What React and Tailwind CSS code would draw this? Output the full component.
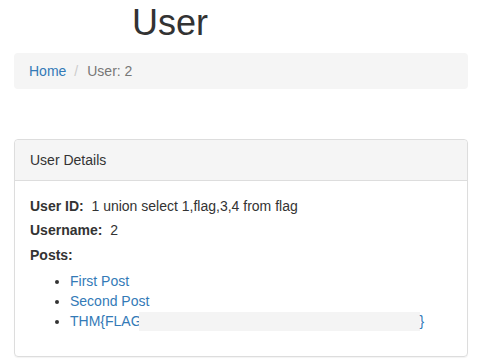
export default function App() {
  return (
    <div className="min-h-screen bg-white text-[14px] leading-[20px] text-[#333] pl-[14px] pr-[10px]" style={{ fontFamily: '"Liberation Sans", Arial, sans-serif' }}>
      <h1 className="pt-[3px] pl-[118px] text-[36px] leading-[39.6px] font-normal mb-[10px]">User</h1>

      <ol className="flex items-center bg-[#f5f5f5] rounded-[4px] px-[15px] py-[8px] mb-[50px]">
        <li><a href="#" className="text-[#337ab7]">Home</a></li>
        <li className="text-[#ccc] pl-[8px] pr-[9px]">/</li>
        <li className="text-[#777]">User: 2</li>
      </ol>

      <div className="border border-[#ddd] rounded-[4px] shadow-[0_1px_1px_rgba(0,0,0,0.05)]">
        <div className="bg-[#f5f5f5] border-b border-[#ddd] rounded-t-[4px] px-[15px] py-[10px]">User Details</div>
        <div className="px-[15px] pt-[15px] pb-[15px]">
          <div className="mb-[4px]"><b>User ID:</b>&nbsp; 1 union select 1,flag,3,4 from flag</div>
          <div className="mb-[5px]"><b>Username:</b>&nbsp; 2</div>
          <div className="mb-[6px]"><b>Posts:</b></div>
          <ul className="list-disc pl-[40px] mb-[10px]">
            <li><a href="#" className="text-[#337ab7]">First Post</a></li>
            <li><a href="#" className="text-[#337ab7]">Second Post</a></li>
            <li>
              <a href="#" className="text-[#337ab7]">
                THM{'{'}FLAG<span className="inline-block align-[-5px] -ml-[3px] w-[281px] h-[19px] bg-[#f4f4f4]"></span>{'}'}
              </a>
            </li>
          </ul>
        </div>
      </div>
    </div>
  );
}
